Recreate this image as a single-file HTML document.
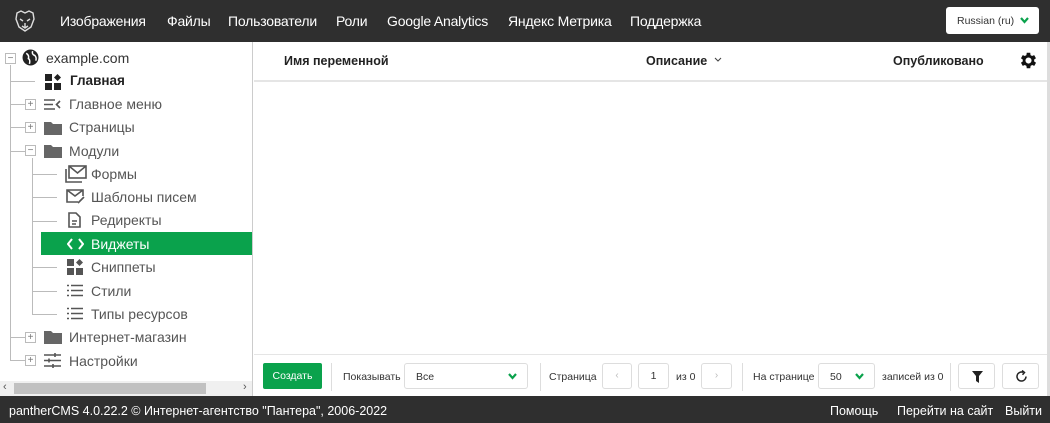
<!DOCTYPE html>
<html><head><meta charset="utf-8"><style>
*{margin:0;padding:0;box-sizing:border-box}
body{width:1050px;height:423px;overflow:hidden;background:#fff;font-family:"Liberation Sans",sans-serif;color:#333;position:relative}
.top{position:absolute;left:0;top:0;width:1050px;height:42px;background:#2f2f2f}
.top a{position:absolute;top:13px;color:#fff;font-size:14px;text-decoration:none;letter-spacing:-0.2px}
.lang{position:absolute;left:946px;top:7px;width:93px;height:27px;background:#fff;border-radius:3px;font-size:10.5px;color:#333;padding:8px 0 0 11px}
.lang svg{position:absolute;right:10px;top:10px}
.left{position:absolute;left:0;top:42px;width:253px;height:354px;border-right:1px solid #ccc}
.row{position:absolute;font-size:14px;color:#555;white-space:nowrap}
.ic{position:absolute}
.vl{position:absolute;width:1px;background:#bbb}
.hl{position:absolute;height:1px;background:#bbb}
.pm{position:absolute;width:11px;height:11px;border:1px solid #bbb;background:#fff;font-size:10px;line-height:9px;text-align:center;color:#777}
.sel{position:absolute;left:41px;top:190px;width:211px;height:23px;background:#0aa24c}
.sb{position:absolute;left:0;top:381px;width:252px;height:15px;background:#f0f0f0}
.sb .th{position:absolute;left:14px;top:2px;width:192px;height:11px;background:#c1c1c1}
.foot{position:absolute;left:0;top:396px;width:1050px;height:27px;background:#2f2f2f;color:#fff;font-size:12.5px}
.foot span{position:absolute;top:8px}
.hdr{position:absolute;top:54px;font-size:12.5px;font-weight:bold;color:#222}
.btn{position:absolute;border:1px solid #ddd;border-radius:3px;background:#fff}
.sm{position:absolute;font-size:10.5px;color:#333;top:371px}
.sep{position:absolute;top:363px;width:1px;height:28px;background:#ddd}
</style></head><body>
<div class="top">
<svg style="position:absolute;left:13px;top:9px" width="24" height="24" viewBox="0 0 24 24" fill="none" stroke="#ddd" stroke-width="1.4"><path d="M4 4 L8 2 L12 4 L16 2 L20 4 L21 10 L18 18 L12 22 L6 18 L3 10 Z"/><path d="M7 10 L10 12 M17 10 L14 12 M9 17 L12 19 L15 17 M12 14 V19"/></svg>
<a style="left:60px">Изображения</a><a style="left:167px">Файлы</a><a style="left:228px">Пользователи</a><a style="left:336px">Роли</a><a style="left:387px">Google Analytics</a><a style="left:508px">Яндекс Метрика</a><a style="left:630px">Поддержка</a>
<div class="lang">Russian (ru)<svg width="9" height="7" viewBox="0 0 9 7"><path d="M1 1 L4.5 5 L8 1" stroke="#0aa24c" stroke-width="2.2" fill="none"/></svg></div>
</div>

<div class="left">
<div class="vl" style="left:10px;top:23px;height:295px"></div>
<div class="vl" style="left:32px;top:116px;height:156px"></div>
<div class="hl" style="left:10px;top:39px;width:25px"></div>
<div class="hl" style="left:10px;top:62px;width:20px"></div>
<div class="hl" style="left:10px;top:85px;width:20px"></div>
<div class="hl" style="left:10px;top:109px;width:20px"></div>
<div class="hl" style="left:32px;top:132px;width:25px"></div>
<div class="hl" style="left:32px;top:155px;width:25px"></div>
<div class="hl" style="left:32px;top:179px;width:25px"></div>
<div class="hl" style="left:32px;top:225px;width:25px"></div>
<div class="hl" style="left:32px;top:249px;width:25px"></div>
<div class="hl" style="left:32px;top:272px;width:25px"></div>
<div class="hl" style="left:10px;top:295px;width:20px"></div>
<div class="hl" style="left:10px;top:318px;width:20px"></div>
<div class="pm" style="left:5px;top:11px">−</div>
<div class="pm" style="left:25px;top:57px">+</div>
<div class="pm" style="left:25px;top:80px">+</div>
<div class="pm" style="left:25px;top:103px">−</div>
<div class="pm" style="left:25px;top:290px">+</div>
<div class="pm" style="left:25px;top:313px">+</div>
<div class="sel"></div>
<svg class="ic" style="left:22px;top:7px" width="17" height="17" viewBox="0 0 16 16"><circle cx="8" cy="8" r="7.5" fill="#222"/><path d="M4 4 Q7 6 6 9 Q8 10 7 14 M10 2 Q9 5 12 6 Q14 8 13 11" stroke="#fff" stroke-width="1.4" fill="none"/></svg>
<div class="row" style="left:46px;top:8px;color:#333">example.com</div>
<svg class="ic" style="left:45px;top:32px" width="16" height="16" viewBox="0 0 16 16" fill="#222"><rect x="0" y="0" width="7" height="7"/><rect x="0" y="9" width="7" height="7"/><rect x="9" y="9" width="7" height="7"/><path d="M12.5 0 L16 3.5 L12.5 7 L9 3.5Z"/></svg>
<div class="row" style="left:70px;top:31px;font-weight:bold;color:#222;font-size:13.5px">Главная</div>
<svg class="ic" style="left:44px;top:56px" width="17" height="13" viewBox="0 0 17 13" stroke="#555" stroke-width="1.6" fill="none"><path d="M0 2H11M0 6.5H9M0 11H11M16 3L12.5 6.5L16 10"/></svg>
<div class="row" style="left:69px;top:54px">Главное меню</div>
<svg class="ic" style="left:44px;top:79px" width="18" height="14" viewBox="0 0 18 14"><path d="M0 1H7L9 3H18V14H0Z" fill="#666"/></svg>
<div class="row" style="left:69px;top:77px">Страницы</div>
<svg class="ic" style="left:44px;top:102px" width="18" height="14" viewBox="0 0 18 14"><path d="M0 1H7L9 3H18V14H0Z" fill="#666"/></svg>
<div class="row" style="left:69px;top:101px">Модули</div>
<svg class="ic" style="left:65px;top:123px" width="22" height="18" viewBox="0 0 22 18" stroke="#555" stroke-width="1.6" fill="none"><rect x="4" y="1" width="17" height="12"/><path d="M4 1L12.5 8L21 1M1 4V17H17"/></svg>
<div class="row" style="left:91px;top:124px">Формы</div>
<svg class="ic" style="left:66px;top:147px" width="20" height="16" viewBox="0 0 20 16" stroke="#555" stroke-width="1.6" fill="none"><path d="M12 13H1V1H17V7M1 1L9 7L17 1M12 14L18 8"/></svg>
<div class="row" style="left:91px;top:147px">Шаблоны писем</div>
<svg class="ic" style="left:68px;top:170px" width="13" height="16" viewBox="0 0 13 16" stroke="#555" stroke-width="1.6" fill="none"><path d="M1 1H8L12 5V15H1Z M4 9H9M4 12H8"/></svg>
<div class="row" style="left:91px;top:170px">Редиректы</div>
<svg class="ic" style="left:67px;top:196px" width="17" height="12" viewBox="0 0 17 12" stroke="#fff" stroke-width="2" fill="none"><path d="M5 1L1 6L5 11M12 1L16 6L12 11"/></svg>
<div class="row" style="left:91px;top:194px;color:#fff">Виджеты</div>
<svg class="ic" style="left:67px;top:217px" width="16" height="16" viewBox="0 0 16 16" fill="#555"><rect x="0" y="0" width="7" height="7"/><rect x="0" y="9" width="7" height="7"/><rect x="9" y="9" width="7" height="7"/><path d="M12.5 0 L16 3.5 L12.5 7 L9 3.5Z"/></svg>
<div class="row" style="left:91px;top:217px">Сниппеты</div>
<svg class="ic" style="left:67px;top:242px" width="16" height="13" viewBox="0 0 16 13" stroke="#555" stroke-width="1.6" fill="none"><path d="M0 1.5H2M0 6.5H2M0 11.5H2M4 1.5H16M4 6.5H16M4 11.5H16"/></svg>
<div class="row" style="left:91px;top:241px">Стили</div>
<svg class="ic" style="left:67px;top:265px" width="16" height="13" viewBox="0 0 16 13" stroke="#555" stroke-width="1.6" fill="none"><path d="M0 1.5H2M0 6.5H2M0 11.5H2M4 1.5H16M4 6.5H16M4 11.5H16"/></svg>
<div class="row" style="left:91px;top:264px">Типы ресурсов</div>
<svg class="ic" style="left:44px;top:288px" width="18" height="14" viewBox="0 0 18 14"><path d="M0 1H7L9 3H18V14H0Z" fill="#666"/></svg>
<div class="row" style="left:69px;top:287px">Интернет-магазин</div>
<svg class="ic" style="left:44px;top:311px" width="17" height="15" viewBox="0 0 17 15" stroke="#555" stroke-width="1.6" fill="none"><path d="M0 2H17M0 7.5H17M0 13H17M11 0V4M5 5.5V9.5M9 11V15"/></svg>
<div class="row" style="left:69px;top:311px">Настройки</div>
</div>
<div class="sb"><div class="th"></div><span style="position:absolute;left:3px;top:0;font-size:11px;color:#555">‹</span><span style="position:absolute;left:243px;top:0;font-size:11px;color:#555">›</span></div>

<div style="position:absolute;left:254px;top:80px;width:793px;height:2px;background:#e5e5e5"></div>
<div style="position:absolute;left:1047px;top:42px;width:3px;height:354px;background:#ddd"></div>
<div class="hdr" style="left:284px">Имя переменной</div>
<div class="hdr" style="left:646px">Описание <svg width="8" height="6" viewBox="0 0 8 6" style="margin-left:3px;vertical-align:2px"><path d="M1 1L4 4L7 1" stroke="#444" stroke-width="1.1" fill="none"/></svg></div>
<div class="hdr" style="left:893px">Опубликовано</div>
<svg style="position:absolute;left:1018px;top:50px" width="21" height="21" viewBox="0 0 24 24"><path fill="#111" d="M19.4 13a7.5 7.5 0 0 0 0-2l2.1-1.6-2-3.5-2.5 1a7.4 7.4 0 0 0-1.7-1L15 3.2h-4L10.6 5.9a7.4 7.4 0 0 0-1.7 1l-2.5-1-2 3.5L6.5 11a7.5 7.5 0 0 0 0 2l-2.1 1.6 2 3.5 2.5-1a7.4 7.4 0 0 0 1.7 1L11 20.8h4l.4-2.7a7.4 7.4 0 0 0 1.7-1l2.5 1 2-3.5zM13 15.5a3.5 3.5 0 1 1 0-7 3.5 3.5 0 0 1 0 7z" transform="translate(-1 0)"/></svg>
<div style="position:absolute;left:254px;top:354px;width:793px;height:1px;background:#e5e5e5"></div>

<div style="position:absolute;left:263px;top:363px;width:59px;height:26px;background:#0aa24c;border-radius:2px;color:#fff;font-size:10.5px;text-align:center;line-height:26px">Создать</div>
<div class="sep" style="left:331px"></div>
<div class="sm" style="left:343px">Показывать</div>
<div class="btn" style="left:404px;top:363px;width:124px;height:26px"><span style="position:absolute;left:11px;top:7px;font-size:10.5px">Все</span><svg style="position:absolute;right:10px;top:9px" width="9" height="7" viewBox="0 0 9 7"><path d="M1 1 L4.5 5 L8 1" stroke="#0aa24c" stroke-width="2.2" fill="none"/></svg></div>
<div class="sep" style="left:540px"></div>
<div class="sm" style="left:549px">Страница</div>
<div class="btn" style="left:602px;top:363px;width:30px;height:26px;color:#bbb;font-size:10px;text-align:center;line-height:24px">‹</div>
<div class="btn" style="left:638px;top:363px;width:31px;height:26px;font-size:10.5px;text-align:center;line-height:24px">1</div>
<div class="sm" style="left:676px">из 0</div>
<div class="btn" style="left:701px;top:363px;width:31px;height:26px;color:#bbb;font-size:10px;text-align:center;line-height:24px">›</div>
<div class="sep" style="left:742px"></div>
<div class="sm" style="left:753px">На странице</div>
<div class="btn" style="left:818px;top:363px;width:57px;height:26px"><span style="position:absolute;left:11px;top:7px;font-size:10.5px">50</span><svg style="position:absolute;right:10px;top:9px" width="9" height="7" viewBox="0 0 9 7"><path d="M1 1 L4.5 5 L8 1" stroke="#0aa24c" stroke-width="2.2" fill="none"/></svg></div>
<div class="sm" style="left:882px">записей из 0</div>
<div class="sep" style="left:950px"></div>
<div class="btn" style="left:958px;top:363px;width:37px;height:26px"><svg style="position:absolute;left:13px;top:7px" width="11" height="12" viewBox="0 0 11 12"><path d="M0 0H11L7 5V12L4 10V5Z" fill="#222"/></svg></div>
<div class="btn" style="left:1002px;top:363px;width:37px;height:26px"><svg style="position:absolute;left:12px;top:6px" width="13" height="13" viewBox="0 0 13 13" fill="none" stroke="#222" stroke-width="1.5"><path d="M11 6.5A4.5 4.5 0 1 1 8 2.3"/><path d="M7 0.5L9.5 2.5L7.5 4.8" /></svg></div>

<div class="foot"><span style="left:9px">pantherCMS 4.0.22.2 © Интернет-агентство "Пантера", 2006-2022</span><span style="left:830px">Помощь</span><span style="left:897px">Перейти на сайт</span><span style="left:1005px">Выйти</span></div>
</body></html>
